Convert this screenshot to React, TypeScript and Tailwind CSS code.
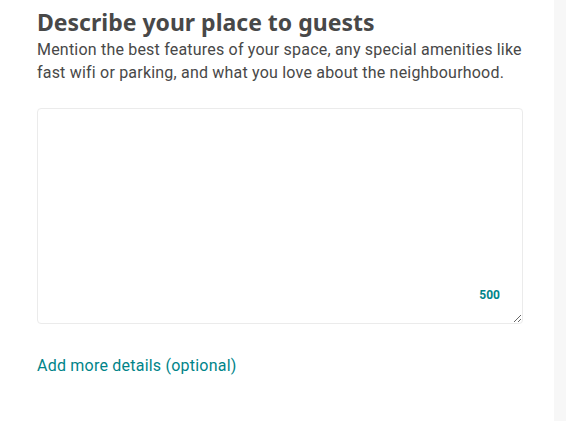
import { useState } from 'react';

const font = { fontFamily: 'Roboto, "Noto Sans", sans-serif' };

export default function App() {
  const [text, setText] = useState('');

  return (
    <div className="flex min-h-[421px] w-[566px] bg-white" style={font}>
      <div className="w-[554px] pl-[37px] pr-[16px] pt-[6px]">
        <h1 className="font-['Noto_Sans',sans-serif] text-[23px] font-bold leading-[32px] text-[#484848]">
          Describe your place to guests
        </h1>
        <p className="text-[16px] leading-[23px] tracking-[0.2px] text-[#484848]">
          Mention the best features of your space, any special amenities like fast wifi or parking, and what you love about the neighbourhood.
        </p>
        <div className="relative mt-[24px] mr-[15px]">
          <textarea
            value={text}
            onChange={(e) => setText(e.target.value)}
            className="block h-[216px] w-full resize-y rounded-[4px] border border-[#ebebeb] p-3 text-[16px] text-[#484848] outline-none"
          />
          <span className="absolute right-[23px] bottom-[20px] text-[12px] font-bold text-[#008489]">
            {500 - text.length}
          </span>
        </div>
        <button className="mt-[31px] text-[16px] leading-[22px] tracking-[0.22px] text-[#008489]">
          Add more details (optional)
        </button>
      </div>
      <div className="flex-1 bg-[#f7f7f7]" />
    </div>
  );
}
